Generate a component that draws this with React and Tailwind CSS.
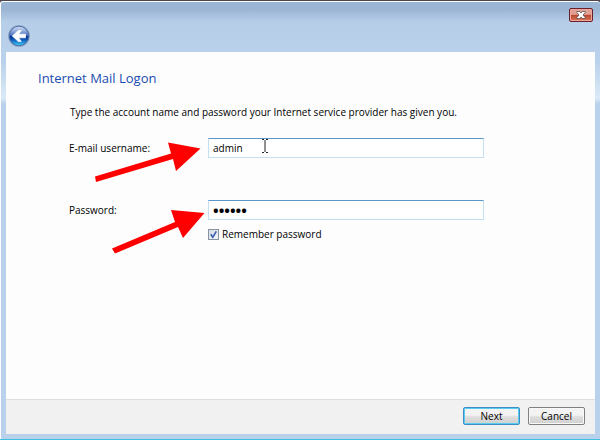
import React, { useState } from "react";

const fieldClass =
  "h-5 min-w-0 flex-1 border border-[#c3dff0] border-t-[#5a96c8] bg-white px-1 text-black outline-none";

const buttonClass =
  "h-[18px] w-[57px] rounded-[2px] border bg-linear-to-b from-[#f3f3f3] from-45% via-[#dedede] via-55% to-[#d0d0d0] leading-4";

const BackIcon = () => (
  <svg viewBox="0 0 24 24" className="size-6">
    <defs>
      <linearGradient id="orb" x1="0" y1="0" x2="0" y2="1">
        <stop offset="0" stopColor="#d3def2" />
        <stop offset="0.25" stopColor="#93abdc" />
        <stop offset="0.47" stopColor="#4a6fbd" />
        <stop offset="0.5" stopColor="#07338c" />
        <stop offset="0.7" stopColor="#0f5cbc" />
        <stop offset="1" stopColor="#45d3fa" />
      </linearGradient>
    </defs>
    <circle cx="12" cy="12" r="11" fill="#93abcc" />
    <circle cx="12" cy="12" r="9.8" fill="url(#orb)" stroke="#48689f" strokeWidth="0.9" />
    <path
      d="M5.300 12 11.300 6.500h3L11.700 10.200H18.500v3.600H11.700L14.300 17.500h-3Z"
      fill="#fff"
      stroke="#fff"
      strokeWidth="0.7"
      strokeLinejoin="round"
    />
  </svg>
);

const CloseIcon = () => (
  <svg viewBox="0 0 10 8" className="h-2 w-2.5">
    <path
      d="M.8 .5h3L5 2 6.200.5h3v1L7 4 9.200 6.500v1h-3L5 6 3.800 7.500h-3v-1L3 4 .8 1.500Z"
      fill="#fff"
      stroke="#5b5055"
      strokeWidth="0.8"
    />
  </svg>
);

const TitleBar = () => (
  <div className="flex h-[50px] items-start justify-between rounded-t-[3px] bg-linear-to-b from-[#9bb5d4] from-15% via-[#b6cee8] via-40% to-[#b9d1ea] pr-[7px] pl-1.5">
    <button type="button" aria-label="Back" className="mt-[22px]">
      <BackIcon />
    </button>
    <button
      type="button"
      aria-label="Close"
      className="mt-[6px] flex h-[14px] w-6 items-center justify-center rounded-[2px] border border-[#6b1f2c] bg-linear-to-b from-[#e2a095] from-45% via-[#b9442b] via-50% to-[#d8765c] shadow-[inset_0_0_0_1px_#eda899]"
    >
      <CloseIcon />
    </button>
  </div>
);

// red pointers at the two fields
const Arrows = () => (
  <svg
    viewBox="0 0 150 120"
    className="pointer-events-none absolute top-[90px] left-[84px] h-[120px] w-[150px]"
    fill="#fe0000"
  >
    <path d="M5 34.500 81 11.500 78 .5 110.500 6.500 86 29 83 17 6 40Z" />
    <path d="M22 106.500 85 80 81 68 114.500 71 93 96 88 85 25 111.500Z" />
  </svg>
);

const TextCursor = () => (
  <svg
    viewBox="0 0 8 14"
    className="pointer-events-none absolute top-[87px] left-[255px] h-[14px] w-2"
    fill="none"
    stroke="#222"
  >
    <path d="M1 .5h2M5 .5h2M1 13.500h2M5 13.500h2M4 1v12" />
  </svg>
);

const App = () => {
  const [username, setUsername] = useState("admin");
  const [password, setPassword] = useState("secret");
  const [remember, setRemember] = useState(true);

  return (
    <div className="flex min-h-screen flex-col border-t border-b border-t-[#4b4650] border-b-[#3fc0e0] bg-[#4b4650] font-['Open_Sans','Noto_Sans',sans-serif] text-[10px] leading-4 text-black">
      <div className="flex flex-1 flex-col rounded-t-[3px] border-t border-l border-white bg-[linear-gradient(#b9d1ea_60px,#dbeaf7_96px,#b9d1ea_102px)]">
        <TitleBar />
        <form
          className="mr-[5px] mb-[5px] ml-[5px] flex flex-1 flex-col bg-[#fdfdfd]"
          onSubmit={(e) => e.preventDefault()}
        >
          <div className="relative flex-1 pt-4 pr-[111px] pl-8">
            <h1 className="text-[13px] leading-5 text-[#1a4cb0]">Internet Mail Logon</h1>
            <p className="mt-4 pl-8 whitespace-nowrap">
              Type the account name and password your Internet service provider has given you.
            </p>
            <div className="mt-[18px] flex items-center pl-[31px]">
              <label htmlFor="username" className="w-[139px]">
                E-mail username:
              </label>
              <input
                id="username"
                type="text"
                className={fieldClass}
                value={username}
                onChange={(e) => setUsername(e.target.value)}
              />
            </div>
            <div className="mt-[42px] flex items-center pl-[31px]">
              <label htmlFor="password" className="w-[139px]">
                Password:
              </label>
              <input
                id="password"
                type="password"
                className={`${fieldClass} text-[15px] font-bold`}
                value={password}
                onChange={(e) => setPassword(e.target.value)}
              />
            </div>
            <div className="mt-[6px] ml-[170px] flex items-center gap-[3px]">
              <span className="relative flex">
                <input
                  id="remember"
                  type="checkbox"
                  className="peer size-[11px] appearance-none border border-[#8795a3] bg-linear-to-br from-[#d3dbe2] to-[#f4f6f8]"
                  checked={remember}
                  onChange={(e) => setRemember(e.target.checked)}
                />
                <svg
                  viewBox="0 0 11 11"
                  className="pointer-events-none invisible absolute inset-0 peer-checked:visible"
                  fill="none"
                  stroke="#3a5fae"
                  strokeWidth="1.6"
                >
                  <path d="M2.800 5.200 4.800 8.200 8.300 2.300" />
                </svg>
              </span>
              <label htmlFor="remember">Remember password</label>
            </div>
            <Arrows />
            <TextCursor />
          </div>
          <div className="flex justify-end gap-2 border-t border-[#dfdfdf] bg-[#f1f1f1] px-[10px] pt-[7px] pb-[9px]">
            <button
              type="submit"
              className={`${buttonClass} border-[#3c8fc0] shadow-[inset_0_0_0_1px_#58cdf2]`}
            >
              Next
            </button>
            <button
              type="button"
              className={`${buttonClass} border-[#808080] shadow-[inset_0_0_0_1px_#f8f8f8]`}
            >
              Cancel
            </button>
          </div>
        </form>
      </div>
    </div>
  );
};

export default App;
